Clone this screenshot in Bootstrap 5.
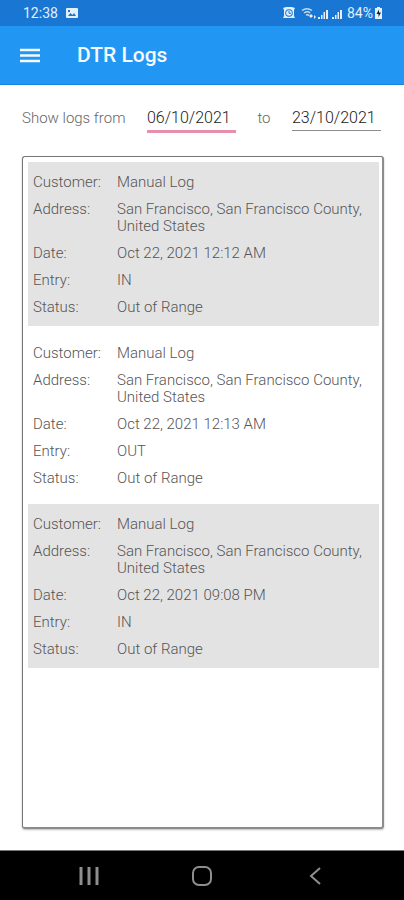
<!DOCTYPE html>
<html lang="en">
<head>
<meta charset="utf-8">
<meta name="viewport" content="width=device-width, initial-scale=1">
<title>DTR Logs</title>
<link href="https://cdn.jsdelivr.net/npm/bootstrap@5.3.0/dist/css/bootstrap.min.css" rel="stylesheet">
<style>
  body { font-family: Roboto, "Liberation Sans", sans-serif; font-size: 15px; line-height: 17px; font-weight: 300; color: #555; background: #fff; }
  .status-bar { background: #1976d2; color: #e3effb; height: 26px; padding: 0 20px 0 23px; font-size: 14px; font-weight: 400; }
  .app-bar { background: #2196f3; color: #f4faff; height: 59px; padding: 0 20px; gap: 37px; border-bottom: 1px solid #1583de; }
  .app-title { font-size: 21px; line-height: 26px; font-weight: 500; }
  .filters { padding: 19px 23px 0 22px; height: 47px; }
  .filters label { color: #666; line-height: 28px; }
  .date-field { width: 89px; height: 27px; padding: 0; border: 0; border-bottom: 1px solid #8c8c8c; border-radius: 0; background: transparent; color: #222; font-size: 16px; font-weight: 300; outline: 0; }
  .date-field.picked { border-bottom: 3px solid #e88fac; height: 29px; }
  .log-panel { margin: 24px 20px 21px 22px; padding: 5px 3px 5px 5px; gap: 7px; border: 1px solid #777; border-right: 2px solid #8c8c8c; border-bottom: 2px solid #8c8c8c; border-radius: 3px; box-shadow: 0 1px 2px #bbb; }
  .log-entry { padding: 12px 5px 10px; gap: 10px; }
  .log-entry.shaded { background: #e3e3e3; }
  .log-entry dt { width: 84px; font-weight: 300; }
  .nav-keys { background: #000; height: 50px; padding: 0 32px; border-top: 1px solid #777; }
  .nav-keys svg { stroke: #8e8e8e; fill: none; stroke-width: 2; }
</style>
</head>
<body class="d-flex flex-column min-vh-100">
<div class="status-bar d-flex align-items-center justify-content-between">
  <div class="d-flex align-items-center gap-2">
    <span>12:38</span>
    <svg width="12" height="12" viewBox="1 0 12 12" aria-hidden="true"><rect x="1" y="1" width="12" height="10" rx="1" fill="#e3effb"/><path d="M3 9l2.5-3 2 2 1.5-2L11 9z" fill="#1976d2"/><path d="M3 3h2v2H3z" fill="#1976d2"/></svg>
  </div>
  <div class="d-flex align-items-center">
    <svg width="64" height="14" viewBox="0 0 64 14" aria-hidden="true" fill="#e3effb">
      <path d="M0 2l3-1h6l3 1-1 2v6l1 2H0l1-2V4z"/><circle cx="6" cy="7" r="3.800" fill="#1976d2"/><circle cx="6" cy="7" r="2.800"/><path d="M6 5v2.300h2" stroke="#1976d2" fill="none"/>
      <g fill="none" stroke="#c1dbf4" stroke-width="1.500"><path d="M19 4.500q5-3.500 10 0M21 7q3.500-2.500 6 0M23 9q2-1 3 1"/></g><path d="M28 8l2 2-2 2-2-2zM31 9l2 2-2 2z"/>
      <path d="M35 13V11h2v2zM38 13V9h1.500v4zM40.500 13V6H42v7zM43 13V4h2v9zM49 13V11h2v2zM52 13V9h1.500v4zM54.500 13V6H56v7zM57 13V4h2v9z"/>
    </svg>
    <span>84%</span>
    <svg width="11" height="12" viewBox="0 0 11 12" aria-hidden="true"><path d="M4 0h3v1h2v11H2V1h2z" fill="#e3effb"/><path d="M6 2.500L3.500 7h2v3L8 5.500H6z" fill="#123"/></svg>
  </div>
</div>
<header class="app-bar d-flex align-items-center">
  <button type="button" class="btn p-0 border-0 d-flex" aria-label="Menu"><svg width="20" height="15" viewBox="0 0 20 15" aria-hidden="true"><path d="M0 2h20M0 7.500h20M0 13h20" stroke="#f4faff" stroke-width="2.600"/></svg></button>
  <h1 class="app-title mb-0">DTR Logs</h1>
</header>
<main class="flex-grow-1 d-flex flex-column">
  <form class="filters d-flex align-items-start justify-content-between">
    <label for="from">Show logs from</label>
    <input class="date-field picked" id="from" type="text" value="06/10/2021">
    <label for="to">to</label>
    <input class="date-field" id="to" type="text" value="23/10/2021">
  </form>
  <section class="log-panel flex-grow-1 d-flex flex-column" aria-label="Logs">
    <dl class="log-entry shaded d-flex flex-column mb-0">
      <div class="d-flex"><dt>Customer:</dt><dd class="mb-0">Manual Log</dd></div>
      <div class="d-flex"><dt>Address:</dt><dd class="mb-0">San Francisco, San Francisco County,<br>United States</dd></div>
      <div class="d-flex"><dt>Date:</dt><dd class="mb-0">Oct 22, 2021 12:12 AM</dd></div>
      <div class="d-flex"><dt>Entry:</dt><dd class="mb-0">IN</dd></div>
      <div class="d-flex"><dt>Status:</dt><dd class="mb-0">Out of Range</dd></div>
    </dl>
    <dl class="log-entry d-flex flex-column mb-0">
      <div class="d-flex"><dt>Customer:</dt><dd class="mb-0">Manual Log</dd></div>
      <div class="d-flex"><dt>Address:</dt><dd class="mb-0">San Francisco, San Francisco County,<br>United States</dd></div>
      <div class="d-flex"><dt>Date:</dt><dd class="mb-0">Oct 22, 2021 12:13 AM</dd></div>
      <div class="d-flex"><dt>Entry:</dt><dd class="mb-0">OUT</dd></div>
      <div class="d-flex"><dt>Status:</dt><dd class="mb-0">Out of Range</dd></div>
    </dl>
    <dl class="log-entry shaded d-flex flex-column mb-0">
      <div class="d-flex"><dt>Customer:</dt><dd class="mb-0">Manual Log</dd></div>
      <div class="d-flex"><dt>Address:</dt><dd class="mb-0">San Francisco, San Francisco County,<br>United States</dd></div>
      <div class="d-flex"><dt>Date:</dt><dd class="mb-0">Oct 22, 2021 09:08 PM</dd></div>
      <div class="d-flex"><dt>Entry:</dt><dd class="mb-0">IN</dd></div>
      <div class="d-flex"><dt>Status:</dt><dd class="mb-0">Out of Range</dd></div>
    </dl>
  </section>
</main>
<nav class="nav-keys d-flex align-items-center" aria-label="System">
  <button type="button" class="btn p-0 border-0 flex-fill" aria-label="Recent apps"><svg width="20" height="20" viewBox="0 0 20 20"><path d="M2 1v18M10 1v18M18 1v18" stroke-width="3"/></svg></button>
  <button type="button" class="btn p-0 border-0 flex-fill" aria-label="Home"><svg width="20" height="20" viewBox="0 0 20 20"><rect x="1" y="1" width="18" height="18" rx="6"/></svg></button>
  <button type="button" class="btn p-0 border-0 flex-fill" aria-label="Back"><svg width="20" height="20" viewBox="0 0 20 20"><path d="M15 2l-9 8 9 8"/></svg></button>
</nav>
<script src="https://cdn.jsdelivr.net/npm/bootstrap@5.3.0/dist/js/bootstrap.bundle.min.js"></script>
</body>
</html>
